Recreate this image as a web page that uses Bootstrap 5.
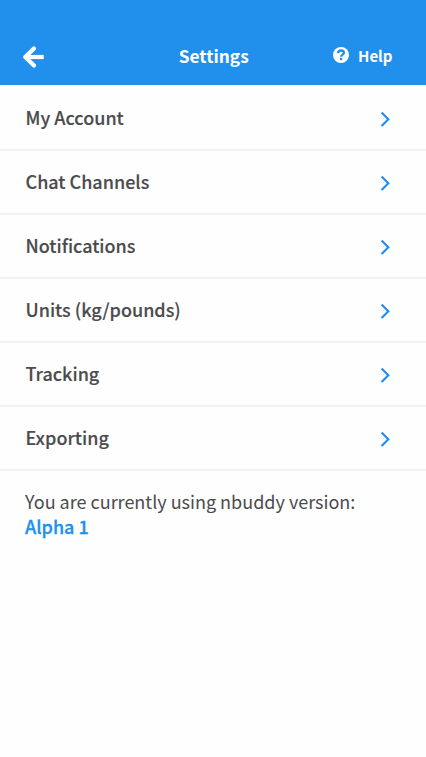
<!DOCTYPE html>
<html lang="en">
<head>
<meta charset="utf-8">
<meta name="viewport" content="width=device-width, initial-scale=1">
<title>Settings</title>
<link href="https://cdn.jsdelivr.net/npm/bootstrap@5.3.0/dist/css/bootstrap.min.css" rel="stylesheet">
<style>
  body { font-family: "Noto Sans CJK SC", "Open Sans", sans-serif; background: #fefefe; color: #4b4b4d; font-size: 18px; line-height: 25px; }
  .top-bar { height: 85px; padding: 27px 33.5px 0 22px; background: #2190ec; color: #fff; }
  .top-bar a { color: #fff; }
  .top-title { font-size: 17.3px; font-weight: 700; line-height: 25px; margin: 0; padding: 0 0 2px 13px; }
  .help-link { font-size: 15px; font-weight: 700; line-height: 24px; gap: 9px; padding-bottom: 2px; }
  .help-link span { padding-top: 1px; }
  .back-link { padding-top: 6px; }
  .settings-list .list-group-item { height: 64px; padding: 2px 36.5px 0 25.5px; background: transparent; color: #4b4b4d; font-weight: 500; border: 0; -webkit-text-stroke: .15px; }
  .settings-list .list-group-item, .settings-list .list-group-item:last-child { border-bottom: 2px solid #f0f4f9; }
  .settings-list .list-group-item span { padding-bottom: 4px; }
  .settings-list .list-group-item:first-child { height: 66px; padding-top: 4px; }
  .version-note { padding: 18px 25px; }
  .version-name { color: #2190ec; font-weight: 500; -webkit-text-stroke: .3px; }
</style>
</head>
<body>
<header class="top-bar">
  <div class="row g-0 align-items-center h-100">
    <div class="col-4"><a href="#" class="back-link d-inline-flex" aria-label="Back">
      <svg width="22" height="24" viewBox="0 0 22 24" fill="none" stroke="#fff" stroke-width="4.2"><path d="M12 3.4 3.2 12 12 20.6" stroke-linecap="round" stroke-linejoin="round"/><path d="M3.5 12H21.7"/></svg>
    </a></div>
    <h1 class="col-4 text-center top-title">Settings</h1>
    <div class="col-4 d-flex justify-content-end"><a href="#" class="help-link d-flex align-items-center text-decoration-none">
      <svg width="16" height="16" viewBox="0 0 16 16"><circle cx="8" cy="8" r="8" fill="#fff"/><path d="M5 6.1C5.3 4.2 6.5 3.5 8 3.5c1.6 0 2.9.9 2.9 2.3C10.9 7.6 8.1 7.6 8.1 9.7" fill="none" stroke="#2190ec" stroke-width="2.3"/><path d="M6.9 10.8h2.4v2.3H6.900z" fill="#2190ec"/></svg>
      <span>Help</span></a></div>
  </div>
</header>
<main>
  <nav class="list-group list-group-flush settings-list">
    <a href="#" class="list-group-item d-flex align-items-center justify-content-between"><span>My Account</span><svg width="10" height="16" viewBox="0 0 10 16" fill="none" stroke="#2190ec" stroke-width="2.2"><path d="M1.6 1.5 8.3 8.3l-6.700 6.800"/></svg></a>
    <a href="#" class="list-group-item d-flex align-items-center justify-content-between"><span>Chat Channels</span><svg width="10" height="16" viewBox="0 0 10 16" fill="none" stroke="#2190ec" stroke-width="2.2"><path d="M1.6 1.5 8.3 8.3l-6.700 6.800"/></svg></a>
    <a href="#" class="list-group-item d-flex align-items-center justify-content-between"><span>Notifications</span><svg width="10" height="16" viewBox="0 0 10 16" fill="none" stroke="#2190ec" stroke-width="2.2"><path d="M1.6 1.5 8.3 8.3l-6.700 6.800"/></svg></a>
    <a href="#" class="list-group-item d-flex align-items-center justify-content-between"><span>Units (kg/pounds)</span><svg width="10" height="16" viewBox="0 0 10 16" fill="none" stroke="#2190ec" stroke-width="2.2"><path d="M1.6 1.5 8.3 8.3l-6.700 6.800"/></svg></a>
    <a href="#" class="list-group-item d-flex align-items-center justify-content-between"><span>Tracking</span><svg width="10" height="16" viewBox="0 0 10 16" fill="none" stroke="#2190ec" stroke-width="2.2"><path d="M1.6 1.5 8.3 8.3l-6.700 6.800"/></svg></a>
    <a href="#" class="list-group-item d-flex align-items-center justify-content-between"><span>Exporting</span><svg width="10" height="16" viewBox="0 0 10 16" fill="none" stroke="#2190ec" stroke-width="2.2"><path d="M1.6 1.5 8.3 8.3l-6.700 6.800"/></svg></a>
  </nav>
  <p class="version-note mb-0">You are currently using nbuddy version:<br><span class="version-name">Alpha 1</span></p>
</main>
<script src="https://cdn.jsdelivr.net/npm/bootstrap@5.3.0/dist/js/bootstrap.bundle.min.js"></script>
</body>
</html>
